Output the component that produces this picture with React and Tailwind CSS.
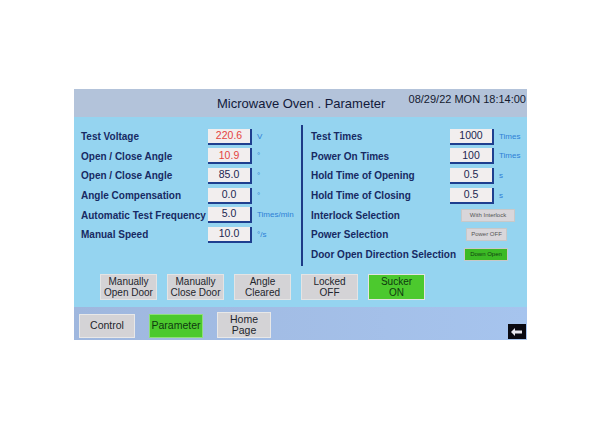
import React from "react";

const font = { fontFamily: '"Liberation Sans", Arial, sans-serif' };

function Input({ value, red, w = "w-[44px]" }) {
  return (
    <div
      className={`${w} h-[16px] bg-[#f2eeee] border-r-2 border-b-2 border-[#1f3f8f] flex items-center justify-center text-[10.5px] ${
        red ? "text-[#e4433f]" : "text-[#1b2550]"
      }`}
    >
      {value}
    </div>
  );
}

function Unit({ children }) {
  return <div className="ml-[5px] text-[8px] text-[#2d7fd6] whitespace-nowrap">{children}</div>;
}

function LeftRow({ label, value, unit, red }) {
  return (
    <div className="h-[19.6px] flex items-center">
      <div className="w-[127px] font-bold text-[10px] text-[#172a63] whitespace-nowrap">{label}</div>
      <Input value={value} red={red} />
      <Unit>{unit}</Unit>
    </div>
  );
}

function RightRow({ label, children }) {
  return (
    <div className="h-[19.6px] flex items-center">
      <div className="w-[139px] font-bold text-[10px] text-[#172a63] whitespace-nowrap">{label}</div>
      {children}
    </div>
  );
}

function SmallBtn({ children, green, w }) {
  return (
    <div
      className={`${w} h-[13px] flex items-center justify-center text-[6px] border border-[#c8c8c8] ${
        green ? "bg-[#3cba25] text-[#104010]" : "bg-[#d9d6da] text-[#555]"
      }`}
    >
      {children}
    </div>
  );
}

function BigBtn({ l1, l2, green }) {
  return (
    <div
      className={`w-[57px] h-[26px] flex flex-col items-center justify-center leading-[11px] text-[10px] border border-[#e4e4e4] ${
        green ? "bg-[#4cc92e] text-[#0e3a0e]" : "bg-[#d4d3d6] text-[#22252c]"
      }`}
    >
      <span>{l1}</span>
      <span>{l2}</span>
    </div>
  );
}

export default function App() {
  return (
    <div className="w-[600px] h-[428px] bg-white pt-[89px] pl-[74px]" style={font}>
      <div className="w-[453px] h-[251px] flex flex-col">
        {/* header */}
        <div className="h-[28px] bg-[#b3c3da] flex items-center relative">
          <div className="absolute left-[143px] top-[5px] text-[13px] text-[#121a3a]">Microwave Oven . Parameter</div>
          <div className="absolute right-[1px] top-[2px] text-[11px] text-[#141a30]">08/29/22 MON 18:14:00</div>
        </div>
        {/* body */}
        <div className="h-[190px] bg-[#95d4f0] flex flex-col">
          <div className="flex pt-[10px]">
            <div className="w-[227px] pl-[7px] flex flex-col">
              <LeftRow label="Test Voltage" value="220.6" unit="V" red />
              <LeftRow label="Open / Close Angle" value="10.9" unit="°" red />
              <LeftRow label="Open / Close Angle" value="85.0" unit="°" />
              <LeftRow label="Angle Compensation" value="0.0" unit="°" />
              <LeftRow label="Automatic Test Frequency" value="5.0" unit="Times/min" />
              <LeftRow label="Manual Speed" value="10.0" unit="°/s" />
            </div>
            <div className="w-[2px] h-[141px] mt-[-2px] bg-[#1d3a86]" />
            <div className="pl-[8px] flex flex-col">
              <RightRow label="Test Times">
                <Input value="1000" />
                <Unit>Times</Unit>
              </RightRow>
              <RightRow label="Power On Times">
                <Input value="100" />
                <Unit>Times</Unit>
              </RightRow>
              <RightRow label="Hold Time of Opening">
                <Input value="0.5" />
                <Unit>s</Unit>
              </RightRow>
              <RightRow label="Hold Time of Closing">
                <Input value="0.5" />
                <Unit>s</Unit>
              </RightRow>
              <RightRow label="Interlock Selection">
                <div className="ml-[11px]">
                  <SmallBtn w="w-[54px]">With Interlock</SmallBtn>
                </div>
              </RightRow>
              <RightRow label="Power Selection">
                <div className="ml-[16px]">
                  <SmallBtn w="w-[41px]">Power OFF</SmallBtn>
                </div>
              </RightRow>
              <RightRow label="Door Open Direction Selection">
                <div className="ml-[14px]">
                  <SmallBtn w="w-[44px]" green>Down Open</SmallBtn>
                </div>
              </RightRow>
            </div>
          </div>
          <div className="flex gap-[10px] pl-[26px] mt-[8px]">
            <BigBtn l1="Manually" l2="Open Door" />
            <BigBtn l1="Manually" l2="Close Door" />
            <BigBtn l1="Angle" l2="Cleared" />
            <BigBtn l1="Locked" l2="OFF" />
            <BigBtn l1="Sucker" l2="ON" green />
          </div>
        </div>
        {/* footer */}
        <div className="h-[33px] bg-gradient-to-r from-[#9fb7de] to-[#a6c4ee] flex items-end pl-[5px] pb-[2px] relative">
          <div className="w-[56px] h-[24px] bg-[#d4d3d6] border border-[#e8e8e8] flex items-center justify-center text-[10.5px] text-[#22252c]">Control</div>
          <div className="ml-[14px] w-[54px] h-[24px] bg-[#4cc92e] border border-[#8ee07a] flex items-center justify-center text-[10.5px] text-[#0e3a0e]">Parameter</div>
          <div className="ml-[14px] w-[54px] h-[26px] bg-[#d4d3d6] border border-[#e8e8e8] flex flex-col items-center justify-center leading-[11px] text-[10.5px] text-[#22252c]">
            <span>Home</span>
            <span>Page</span>
          </div>
          <div className="absolute right-[1px] bottom-[1px] w-[18px] h-[15px] bg-[#0a0a12] flex items-center justify-center">
            <svg width="12" height="8" viewBox="0 0 12 8">
              <path d="M0 4 L4 0 L4 2.5 L11 2.5 L11 5.5 L4 5.5 L4 8 Z" fill="#e8e8f0" />
            </svg>
          </div>
        </div>
      </div>
    </div>
  );
}
